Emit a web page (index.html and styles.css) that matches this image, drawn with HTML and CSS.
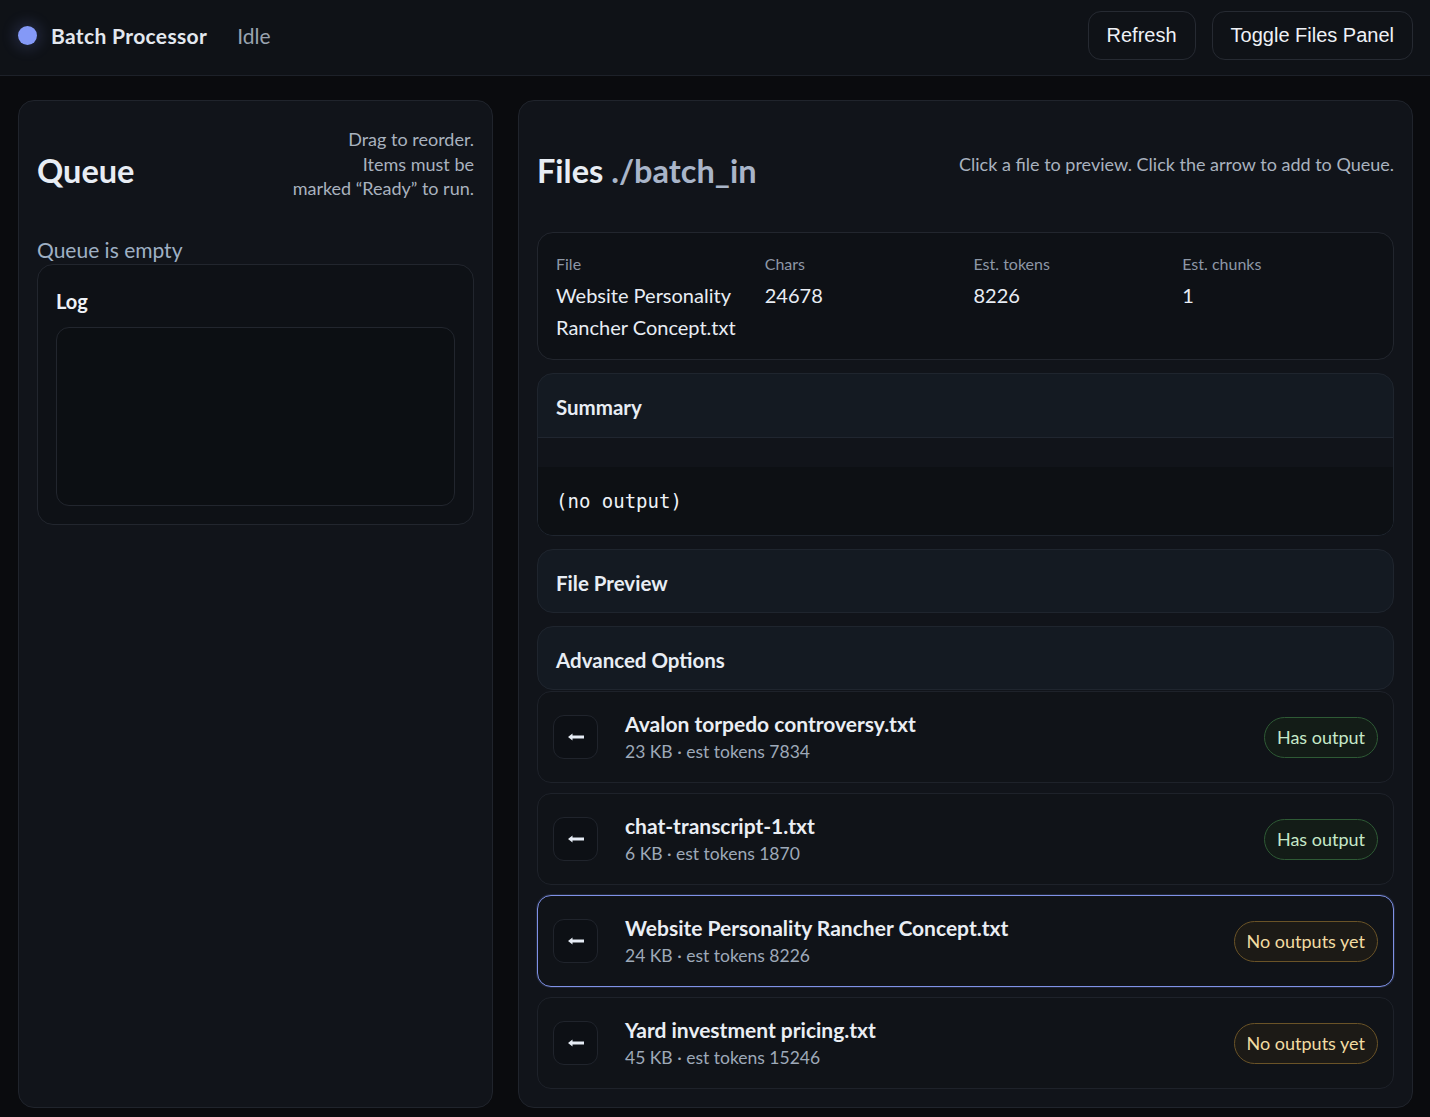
FILE: index.html
```html
<!DOCTYPE html>
<html lang="en">
<head>
<meta charset="utf-8">
<title>Batch Processor</title>
<link rel="stylesheet" href="styles.css">
</head>
<body>
<header class="topbar">
  <div class="brand">
    <span class="dot"></span>
    <span class="brand-name">Batch Processor</span>
    <span class="status">Idle</span>
  </div>
  <div class="actions">
    <button class="btn">Refresh</button>
    <button class="btn">Toggle Files Panel</button>
  </div>
</header>

<main class="layout">
  <section class="panel">
    <div class="panel-head">
      <h2 class="panel-title">Queue</h2>
      <p class="hint">Drag to reorder.<br>Items must be<br>marked “Ready” to run.</p>
    </div>
    <div class="empty">Queue is empty</div>
    <div class="card log-card">
      <h3 class="card-title">Log</h3>
      <div class="log-box"></div>
    </div>
  </section>

  <section class="panel">
    <div class="panel-head">
      <h2 class="panel-title">Files <span class="path">./batch_in</span></h2>
      <p class="hint">Click a file to preview. Click the arrow to add to Queue.</p>
    </div>

    <div class="stack">
      <div class="card details">
        <div class="detail">
          <div class="d-label">File</div>
          <div class="d-value">Website Personality Rancher Concept.txt</div>
        </div>
        <div class="detail">
          <div class="d-label">Chars</div>
          <div class="d-value">24678</div>
        </div>
        <div class="detail">
          <div class="d-label">Est. tokens</div>
          <div class="d-value">8226</div>
        </div>
        <div class="detail">
          <div class="d-label">Est. chunks</div>
          <div class="d-value">1</div>
        </div>
      </div>

      <div class="section">
        <div class="section-head">Summary</div>
        <div class="section-body">
          <pre class="output">(no output)</pre>
        </div>
      </div>

      <div class="section">
        <div class="section-head solo">File Preview</div>
      </div>

      <div class="section">
        <div class="section-head solo">Advanced Options</div>
      </div>
    </div>

    <div class="files">
      <div class="file-row">
        <button class="arrow-btn" aria-label="Add to queue"><svg width="18" height="10" viewBox="0 0 18 10"><path d="M1 5 L5.5 1.6 L5.5 3.6 L17 3.6 L17 6.4 L5.5 6.4 L5.5 8.4 Z" fill="#e6ecf5"/></svg></button>
        <div class="file-info">
          <div class="file-name">Avalon torpedo controversy.txt</div>
          <div class="file-meta">23 KB · est tokens 7834</div>
        </div>
        <span class="badge ok">Has output</span>
      </div>
      <div class="file-row">
        <button class="arrow-btn" aria-label="Add to queue"><svg width="18" height="10" viewBox="0 0 18 10"><path d="M1 5 L5.5 1.6 L5.5 3.6 L17 3.6 L17 6.4 L5.5 6.4 L5.5 8.4 Z" fill="#e6ecf5"/></svg></button>
        <div class="file-info">
          <div class="file-name">chat-transcript-1.txt</div>
          <div class="file-meta">6 KB · est tokens 1870</div>
        </div>
        <span class="badge ok">Has output</span>
      </div>
      <div class="file-row selected">
        <button class="arrow-btn" aria-label="Add to queue"><svg width="18" height="10" viewBox="0 0 18 10"><path d="M1 5 L5.5 1.6 L5.5 3.6 L17 3.6 L17 6.4 L5.5 6.4 L5.5 8.4 Z" fill="#e6ecf5"/></svg></button>
        <div class="file-info">
          <div class="file-name">Website Personality Rancher Concept.txt</div>
          <div class="file-meta">24 KB · est tokens 8226</div>
        </div>
        <span class="badge warn">No outputs yet</span>
      </div>
      <div class="file-row">
        <button class="arrow-btn" aria-label="Add to queue"><svg width="18" height="10" viewBox="0 0 18 10"><path d="M1 5 L5.5 1.6 L5.5 3.6 L17 3.6 L17 6.4 L5.5 6.4 L5.5 8.4 Z" fill="#e6ecf5"/></svg></button>
        <div class="file-info">
          <div class="file-name">Yard investment pricing.txt</div>
          <div class="file-meta">45 KB · est tokens 15246</div>
        </div>
        <span class="badge warn">No outputs yet</span>
      </div>
    </div>
  </section>
</main>
</body>
</html>
```

FILE: styles.css
```css
* { box-sizing: border-box; }

html, body {
  margin: 0;
  padding: 0;
  background: #0a0b0e;
  color: #e6ebf2;
  font-family: Lato, "Noto Sans", sans-serif;
}

.topbar {
  height: 76px;
  display: flex;
  align-items: center;
  justify-content: space-between;
  padding: 0 17px 5px 18px;
  background: #0f1217;
  border-bottom: 1px solid #1d2129;
}

.brand {
  display: flex;
  align-items: center;
}

.dot {
  width: 19px;
  height: 19px;
  border-radius: 50%;
  background: #8499f7;
  box-shadow: 0 0 14px 4px rgba(120, 140, 240, 0.18);
  margin-right: 14px;
}

.brand-name {
  font-size: 21px;
  font-weight: 700;
  letter-spacing: 0.35px;
  color: #e3e8ef;
  margin-right: 30px;
}

.status {
  font-size: 21px;
  color: #9aa3af;
}

.actions {
  display: flex;
  gap: 16px;
}

.btn {
  height: 49px;
  padding: 0 18px;
  background: #0f1217;
  color: #eef1f6;
  border: 1px solid #262a32;
  border-radius: 13px;
  font-family: "Liberation Sans", Arial, sans-serif;
  font-size: 20px;
}

.layout {
  display: grid;
  grid-template-columns: 475px 1fr;
  gap: 25px;
  padding: 24px 17px 10px 18px;
}

.panel {
  background: #11141a;
  border: 1px solid #20242c;
  border-radius: 16px;
  padding: 18px;
}

.panel-head {
  display: flex;
  justify-content: space-between;
  align-items: center;
  min-height: 74px;
  margin-top: 8px;
}

.panel-title {
  margin: 0;
  padding-top: 13px;
  font-size: 32.5px;
  font-weight: 700;
  line-height: 40px;
  color: #e8edf4;
}

.path {
  color: #a9b5c9;
}

.hint {
  margin: 0;
  font-size: 18px;
  line-height: 24.5px;
  color: #a9b2bf;
  text-align: right;
}

.empty {
  margin-top: 35px;
  font-size: 21px;
  line-height: 28px;
  color: #9fb0c4;
}

.card {
  background: #0e1116;
  border: 1px solid #22262e;
  border-radius: 16px;
}

.log-card {
  padding: 18px;
}

.card-title {
  margin: 4px 0 12px;
  font-size: 20px;
  line-height: 28px;
  font-weight: 700;
  color: #eef2f7;
}

.log-box {
  height: 179px;
  background: #0c0f13;
  border: 1px solid #22262e;
  border-radius: 13px;
}

.stack {
  display: flex;
  flex-direction: column;
  gap: 13px;
  margin-top: 31px;
}

.details {
  display: grid;
  grid-template-columns: repeat(4, 1fr);
  gap: 16px;
  padding: 19px 18px 16px;
}

.d-label {
  font-size: 16px;
  line-height: 24px;
  color: #8d97a6;
}

.d-value {
  margin-top: 3px;
  font-size: 20px;
  line-height: 32px;
  color: #e8edf4;
}

.section {
  background: #141a22;
  border: 1px solid #1f252e;
  border-radius: 16px;
  overflow: hidden;
}

.section-head {
  padding: 19px 18px 16px;
  font-size: 20.5px;
  line-height: 28px;
  font-weight: 700;
  color: #e8edf4;
  border-bottom: 1px solid #202630;
}

.section-head.solo {
  border-bottom: none;
  padding: 19px 18px 15px;
}

.section-body {
  background: #11141a;
  padding-top: 29px;
}

.output {
  margin: 0;
  padding: 20px 18px 20px;
  background: #0d1014;
  font-family: "DejaVu Sans Mono", "Liberation Mono", monospace;
  font-size: 19px;
  line-height: 28px;
  color: #eef2f7;
}

.files {
  display: flex;
  flex-direction: column;
  gap: 10px;
  margin-top: 1px;
}

.file-row {
  display: flex;
  align-items: center;
  padding: 17px 15px;
  background: #101318;
  border: 1px solid #1e222a;
  border-radius: 14px;
}

.file-row.selected {
  border-color: #7f91e6;
  box-shadow: 0 0 0 1px rgba(127, 145, 230, 0.15);
}

.arrow-btn {
  width: 45px;
  height: 44px;
  flex: none;
  display: flex;
  align-items: center;
  justify-content: center;
  background: #0d1015;
  border: 1px solid #20242c;
  border-radius: 11px;
  padding: 0;
  margin-right: 27px;
}

.file-info {
  flex: 1;
  min-width: 0;
}

.file-name {
  font-size: 21px;
  line-height: 30px;
  font-weight: 700;
  color: #eaeef4;
}

.file-meta {
  font-size: 17.5px;
  line-height: 26px;
  color: #9ea9b8;
}

.badge {
  flex: none;
  height: 41px;
  display: inline-flex;
  align-items: center;
  padding: 0 12px;
  border-radius: 999px;
  font-size: 18px;
  border: 1px solid;
}

.badge.ok {
  background: #131c17;
  border-color: #2e5a35;
  color: #c6e8c8;
}

.badge.warn {
  background: #1c1a16;
  border-color: #6a5327;
  color: #f2dca2;
}
```
